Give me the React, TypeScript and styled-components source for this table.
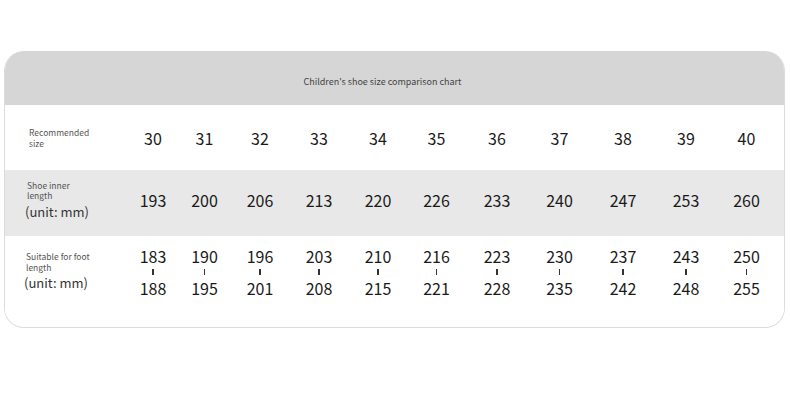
import styled, { createGlobalStyle } from "styled-components";

const sizes = [30, 31, 32, 33, 34, 35, 36, 37, 38, 39, 40];
const inner = [193, 200, 206, 213, 220, 226, 233, 240, 247, 253, 260];
const foot = [
    [183, 188],
    [190, 195],
    [196, 201],
    [203, 208],
    [210, 215],
    [216, 221],
    [223, 228],
    [230, 235],
    [237, 242],
    [243, 248],
    [250, 255],
];

// column widths read off the chart, they are not even
const columns = "123px 50px 53px 58px 60px 58px 59px 62px 63px 64px 62px 59px";

const App = () => {
    return (
        <>
            <GlobalStyle />
            <Page>
                <Card>
                    <Header>Children's shoe size comparison chart</Header>
                    <Row $height={65}>
                        <Label>
                            <Small $left={24}>
                                Recommended
                                <br />
                                size
                            </Small>
                        </Label>
                        {sizes.map((s) => (
                            <Value key={s}>{s}</Value>
                        ))}
                    </Row>
                    <Row $height={66} $bottom={6} $shade>
                        <Label>
                            <Small $left={22}>
                                Shoe inner
                                <br />
                                length
                            </Small>
                            <Unit $left={20}>(unit: mm)</Unit>
                        </Label>
                        {inner.map((v) => (
                            <Value key={v}>{v}</Value>
                        ))}
                    </Row>
                    <Row $height={91} $bottom={20}>
                        <Label>
                            <Small $left={21}>
                                Suitable for foot
                                <br />
                                length
                            </Small>
                            <Unit $left={19}>(unit: mm)</Unit>
                        </Label>
                        {foot.map(([a, b]) => (
                            <Range key={a}>
                                <span>{a}</span>
                                <Tick />
                                <span>{b}</span>
                            </Range>
                        ))}
                    </Row>
                </Card>
            </Page>
        </>
    );
};

const GlobalStyle = createGlobalStyle`
    body {
        margin: 0;
        background: #ffffff;
        font-family: "Noto Sans CJK SC", "Noto Sans", sans-serif;
    }
`;

const Page = styled.div`
    width: 790px;
    height: 419px;
    padding: 51px 0 0 4px;
    box-sizing: border-box;
`;

const Card = styled.div`
    width: 781px;
    box-sizing: border-box;
    border: 1px solid #dcdcdc;
    border-top: none;
    border-radius: 20px;
    overflow: hidden;
`;

const Header = styled.div`
    height: 54px;
    box-sizing: border-box;
    padding: 6px 24px 0 0;
    background: #d6d6d6;
    display: flex;
    align-items: center;
    justify-content: center;
    font-size: 9px;
    color: #444;
`;

const Row = styled.div<{ $height: number; $shade?: boolean; $bottom?: number }>`
    display: grid;
    grid-template-columns: ${columns};
    align-items: center;
    height: ${(p) => p.$height}px;
    box-sizing: border-box;
    padding-bottom: ${(p) => p.$bottom || 0}px;
    background: ${(p) => (p.$shade ? "#e8e8e8" : "#ffffff")};
`;

const Label = styled.div`
    display: flex;
    flex-direction: column;
    color: #555;
`;

const Small = styled.div<{ $left: number }>`
    padding-left: ${(p) => p.$left}px;
    font-size: 8.5px;
    line-height: 10.5px;
`;

const Unit = styled.div<{ $left: number }>`
    padding-left: ${(p) => p.$left}px;
    margin-top: 2px;
    font-size: 13px;
    line-height: 18px;
    color: #333;
`;

const Value = styled.div`
    text-align: center;
    font-size: 16px;
    color: #1a1a1a;
`;

const Range = styled.div`
    display: flex;
    flex-direction: column;
    align-items: center;
    font-size: 16px;
    line-height: 16px;
    color: #1a1a1a;
    span {
        display: block;
        height: 16px;
    }
`;

const Tick = styled.i`
    display: block;
    width: 1.5px;
    height: 6px;
    margin: 5px 0;
    background: #333;
`;

export default App;
